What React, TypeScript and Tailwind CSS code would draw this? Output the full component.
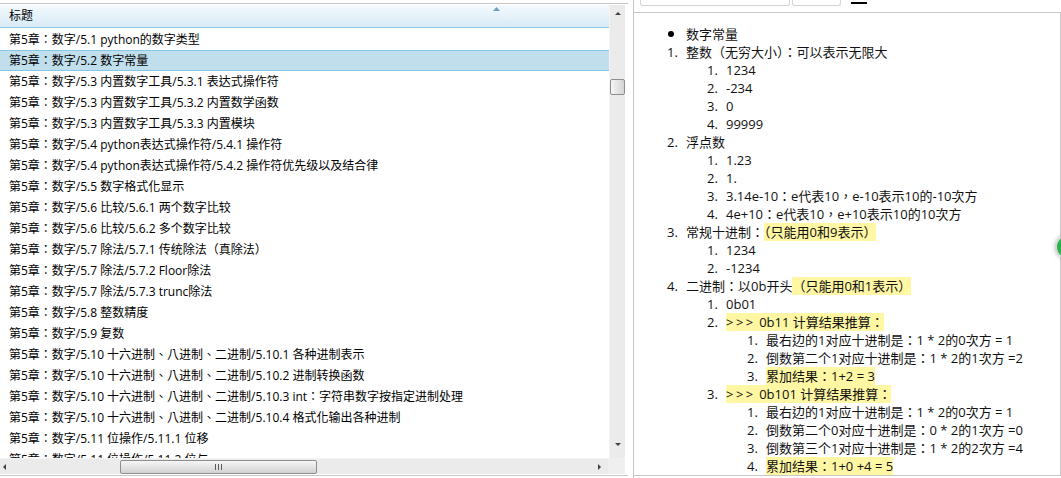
import type { ReactNode } from "react";

const rows = [
  "第5章：数字/5.1 python的数字类型",
  "第5章：数字/5.2 数字常量",
  "第5章：数字/5.3 内置数字工具/5.3.1 表达式操作符",
  "第5章：数字/5.3 内置数字工具/5.3.2 内置数学函数",
  "第5章：数字/5.3 内置数字工具/5.3.3 内置模块",
  "第5章：数字/5.4 python表达式操作符/5.4.1 操作符",
  "第5章：数字/5.4 python表达式操作符/5.4.2 操作符优先级以及结合律",
  "第5章：数字/5.5 数字格式化显示",
  "第5章：数字/5.6 比较/5.6.1 两个数字比较",
  "第5章：数字/5.6 比较/5.6.2 多个数字比较",
  "第5章：数字/5.7 除法/5.7.1 传统除法（真除法）",
  "第5章：数字/5.7 除法/5.7.2 Floor除法",
  "第5章：数字/5.7 除法/5.7.3 trunc除法",
  "第5章：数字/5.8 整数精度",
  "第5章：数字/5.9 复数",
  "第5章：数字/5.10 十六进制、八进制、二进制/5.10.1 各种进制表示",
  "第5章：数字/5.10 十六进制、八进制、二进制/5.10.2 进制转换函数",
  "第5章：数字/5.10 十六进制、八进制、二进制/5.10.3 int：字符串数字按指定进制处理",
  "第5章：数字/5.10 十六进制、八进制、二进制/5.10.4 格式化输出各种进制",
  "第5章：数字/5.11 位操作/5.11.1 位移",
  "第5章：数字/5.11 位操作/5.11.2 位与",
];

const indent: Record<number, string> = {
  1: "pl-[33px]",
  2: "pl-[73px]",
  3: "pl-[113px]",
};

function Line({ lv, m, children }: { lv: number; m: ReactNode; children: ReactNode }) {
  return (
    <div className={`flex h-[18px] items-center whitespace-nowrap ${indent[lv]}`}>
      <span className="w-[19px] shrink-0 flex items-center">{m}</span>
      <span>{children}</span>
    </div>
  );
}

function Hl({ children }: { children: ReactNode }) {
  return <span className="bg-[#fff7a3]">{children}</span>;
}

function Prompt() {
  return <span className="tracking-[2.5px]">&gt;&gt;&gt;</span>;
}

function Tri({ dir, className }: { dir: "up" | "down" | "left" | "right"; className?: string }) {
  const pts = {
    up: "3,0 6,3 0,3",
    down: "0,0 6,0 3,3",
    left: "3,0 3,6 0,3",
    right: "0,0 3,3 0,6",
  }[dir];
  const vertical = dir === "up" || dir === "down";
  return (
    <svg width={vertical ? 6 : 3} height={vertical ? 3 : 6} className={className}>
      <polygon points={pts} fill="#404040" />
    </svg>
  );
}

export default function App() {
  return (
    <div className="w-[1061px] h-[478px] bg-white relative overflow-hidden flex text-black font-['Open_Sans','Noto_Sans_CJK_TC',sans-serif]">
      {/* left: title list */}
      <div className="w-[633px] shrink-0 pt-[3px]">
        <div className="w-[628px] h-[473px] border-y border-[#c6c6c6] pt-px pb-px flex flex-col">
          <div className="flex flex-1 min-h-0">
            <div className="w-[609px] flex flex-col min-h-0">
              <div className="relative h-[23px] shrink-0 flex items-center pl-[9px] text-[12px] bg-linear-to-b from-[#f3f9fd] to-[#d8ebf6] border-b border-[#8ccaea]">
                标题
                <svg width="7" height="4" className="absolute left-[493px] top-[2px]">
                  <polygon points="3.5,0 7,4 0,4" fill="#6f9fc2" />
                </svg>
              </div>
              <div className="flex-1 min-h-0 overflow-hidden pt-px">
                {rows.map((r, i) => (
                  <div
                    key={i}
                    className={
                      i === 1
                        ? "h-[21px] flex items-center pl-[9px] text-[12px] whitespace-nowrap bg-[#c1deed] border-y border-[#86c6e6]"
                        : "h-[21px] flex items-center pl-[9px] text-[12px] whitespace-nowrap"
                    }
                  >
                    {r}
                  </div>
                ))}
              </div>
            </div>
            {/* vertical scrollbar */}
            <div className="w-[16px] shrink-0 bg-[#ebebeb] border-l border-[#f4f4f4] flex flex-col items-center">
              <div className="h-[17px] flex items-center justify-center">
                <Tri dir="up" />
              </div>
              <div className="mt-[57px] w-[15px] h-[16px] rounded-[2px] border border-[#8e8e8e] bg-linear-to-r from-[#f6f6f6] to-[#d4d4d4]" />
              <div className="flex-1" />
              <div className="h-[17px] flex items-start justify-center pt-[2px]">
                <Tri dir="down" />
              </div>
            </div>
          </div>
          {/* horizontal scrollbar */}
          <div className="h-[16px] shrink-0 flex">
            <div className="w-[608px] bg-[#ebebeb] border-t border-[#f4f4f4] flex items-center">
              <div className="w-[17px] flex justify-start pl-[3px]">
                <Tri dir="left" />
              </div>
              <div className="ml-[103px] w-[197px] h-[14px] rounded-[2px] border border-[#8e8e8e] bg-linear-to-b from-[#f6f6f6] to-[#d2d2d2] flex items-center justify-center gap-[2px]">
                <span className="w-px h-[6px] bg-[#5a5a5a]" />
                <span className="w-px h-[6px] bg-[#5a5a5a]" />
                <span className="w-px h-[6px] bg-[#5a5a5a]" />
              </div>
              <div className="flex-1" />
              <div className="w-[10px] flex">
                <Tri dir="right" />
              </div>
            </div>
            <div className="w-[17px] bg-[#efefef]" />
          </div>
        </div>
      </div>

      {/* separator */}
      <div className="w-px shrink-0 bg-[#c6c6c6]" />

      {/* right: content */}
      <div className="flex-1 flex flex-col">
        <div className="h-[12px] shrink-0 flex items-start">
          <div className="ml-[6px] w-[150px] h-[6px] border border-t-0 border-[#d4d4d4] rounded-b-[3px]" />
          <div className="ml-[2px] w-[49px] h-[6px] border border-t-0 border-[#d4d4d4] rounded-b-[3px]" />
          <div className="ml-[10px] mt-[2px] w-[16px] h-[2px] bg-black" />
        </div>
        <div className="h-[464px] border-t border-r border-b border-[#c8c8c8] pt-[12px] text-[13px] leading-[18px] text-[#111]">
          <Line lv={1} m={<span className="ml-[1px] w-[6px] h-[6px] rounded-full bg-black" />}>数字常量</Line>
          <Line lv={1} m="1.">整数（无穷大小）：可以表示无限大</Line>
          <Line lv={2} m="1.">1234</Line>
          <Line lv={2} m="2.">-234</Line>
          <Line lv={2} m="3.">0</Line>
          <Line lv={2} m="4.">99999</Line>
          <Line lv={1} m="2.">浮点数</Line>
          <Line lv={2} m="1.">1.23</Line>
          <Line lv={2} m="2.">1.</Line>
          <Line lv={2} m="3.">3.14e-10：e代表10，e-10表示10的-10次方</Line>
          <Line lv={2} m="4.">4e+10：e代表10，e+10表示10的10次方</Line>
          <Line lv={1} m="3.">
            常规十进制：<Hl>（只能用0和9表示）</Hl>
          </Line>
          <Line lv={2} m="1.">1234</Line>
          <Line lv={2} m="2.">-1234</Line>
          <Line lv={1} m="4.">
            二进制：以0b开头<Hl>（只能用0和1表示）</Hl>
          </Line>
          <Line lv={2} m="1.">0b01</Line>
          <Line lv={2} m="2.">
            <Hl>
              <Prompt /> 0b11 计算结果推算：
            </Hl>
          </Line>
          <Line lv={3} m="1.">最右边的1对应十进制是：1 * 2的0次方 = 1</Line>
          <Line lv={3} m="2.">倒数第二个1对应十进制是：1 * 2的1次方 =2</Line>
          <Line lv={3} m="3.">
            <Hl>累加结果：1+2 = 3</Hl>
          </Line>
          <Line lv={2} m="3.">
            <Hl>
              <Prompt /> 0b101 计算结果推算：
            </Hl>
          </Line>
          <Line lv={3} m="1.">最右边的1对应十进制是：1 * 2的0次方 = 1</Line>
          <Line lv={3} m="2.">倒数第二个0对应十进制是：0 * 2的1次方 =0</Line>
          <Line lv={3} m="3.">倒数第三个1对应十进制是：1 * 2的2次方 =4</Line>
          <Line lv={3} m="4.">
            <Hl>累加结果：1+0 +4 = 5</Hl>
          </Line>
        </div>
      </div>

      {/* floating green button at right edge */}
      <div className="absolute left-[1055px] top-[234px] w-[26px] h-[26px] rounded-full border-2 border-[#d9d9d9] bg-[#2eb24c] shadow-[0_0_4px_rgba(0,0,0,0.25)]" />
    </div>
  );
}
